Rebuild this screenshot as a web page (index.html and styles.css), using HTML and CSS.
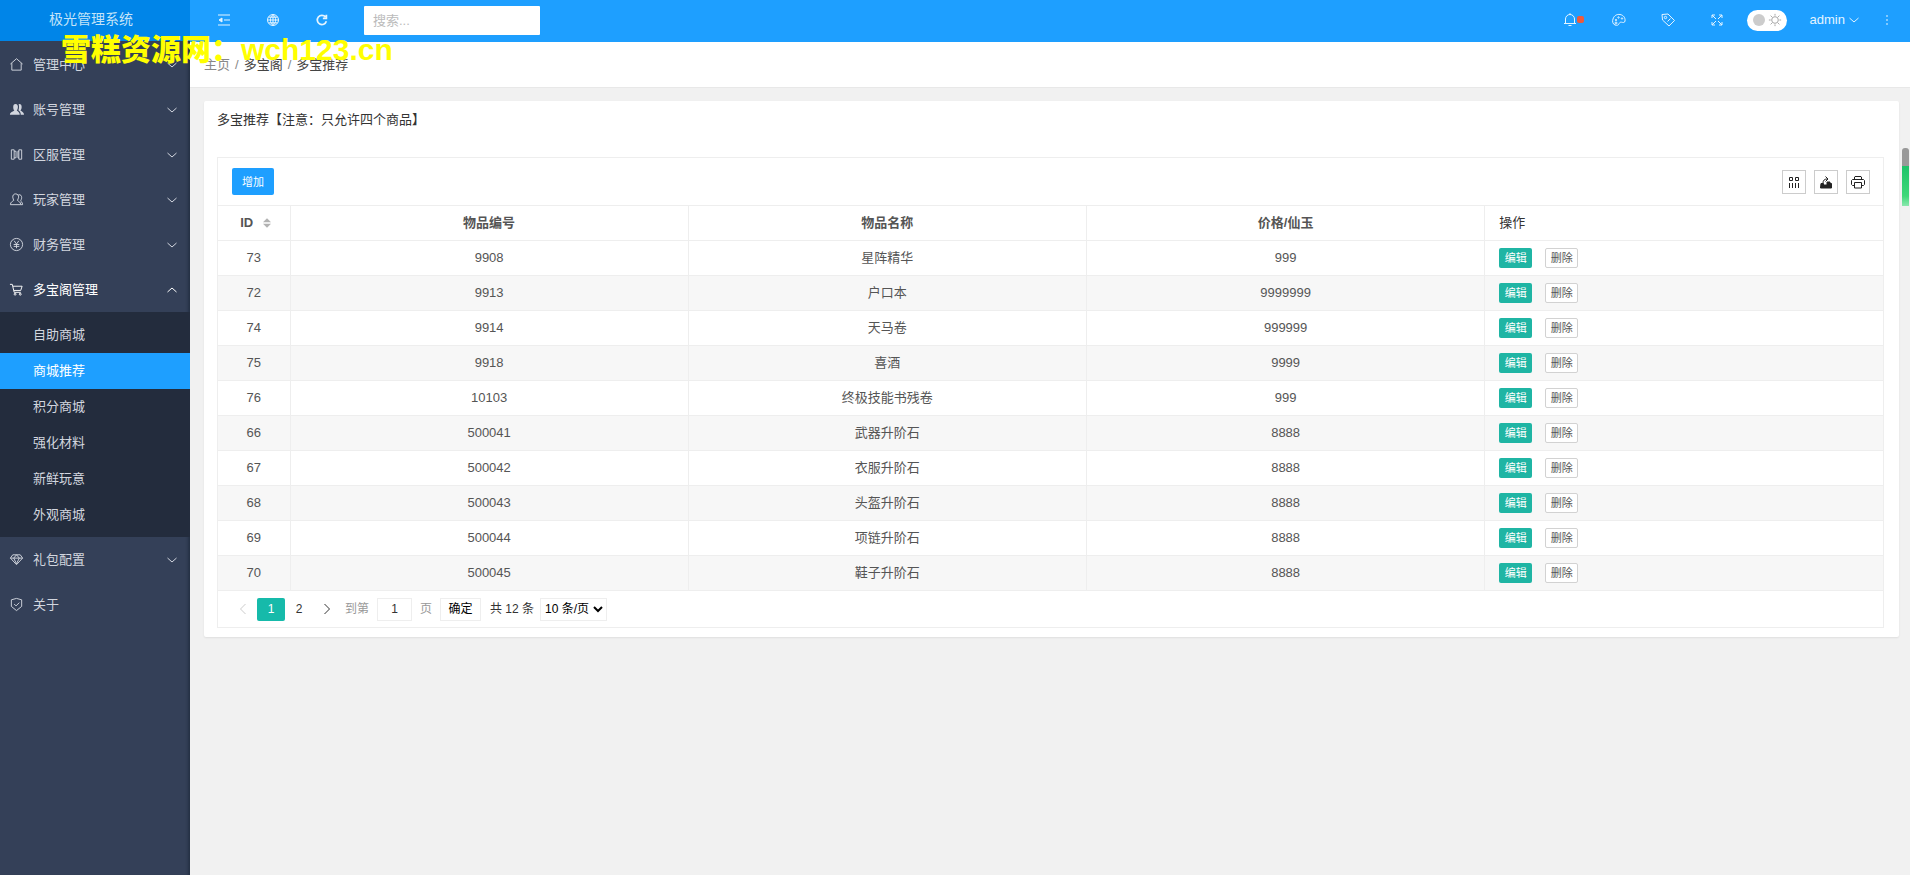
FILE: index.html
```html
<!DOCTYPE html>
<html lang="zh-CN">
<head>
<meta charset="utf-8">
<title>极光管理系统</title>
<link rel="stylesheet" href="styles.css">
</head>
<body>
<div class="layout">
  <aside class="side">
    <div class="logo">极光管理系统</div>
    <nav class="menu">
      <a class="item" href="#"><svg class="icon" viewBox="0 0 16 16"><path d="M1.500 7.500 8 1.800l6.500 5.700M3 6.500V14h10V6.500"/></svg><span>管理中心</span><svg class="arrow" viewBox="0 0 12 8"><path d="m1.500 2 4.500 4 4.500-4"/></svg></a>
      <a class="item" href="#"><svg class="icon solid" viewBox="0 0 16 16"><path d="M7 2c1.800 0 2.500 1.500 2.500 3.200S8.700 8.500 8.300 9c1.500 1.200 3.200 2 3.200 4.500H1c0-2.500 2.500-3 4.700-4.500C5 8.500 4.500 7 4.500 5.200S5.200 2 7 2zM10.300 2.300c2.200-.4 3.200 1 3.200 2.900s-.8 3.300-1.300 3.800c1.800 1.200 3.800 2 3.800 4.500h-3.500c0-2.500-1-3.300-2.500-4.600.8-1.600.9-4.600.3-6.600z"/></svg><span>账号管理</span><svg class="arrow" viewBox="0 0 12 8"><path d="m1.500 2 4.500 4 4.500-4"/></svg></a>
      <a class="item" href="#"><svg class="icon" viewBox="0 0 16 16"><path d="M2.500 3h3v10h-3zM10.500 3h3v10h-3zM5.500 4.500h2v7h-2M10.500 4.500h-1v7h1"/></svg><span>区服管理</span><svg class="arrow" viewBox="0 0 12 8"><path d="m1.500 2 4.500 4 4.500-4"/></svg></a>
      <a class="item" href="#"><svg class="icon" viewBox="0 0 16 16"><path d="M7 2C4.500 2 4 4 4 5.500S5 8 5 9c-1 1-3.500 1.500-3.500 4.500h11C12.500 10.500 10 10 9 9c0-1 1.300-2 1.300-3.500S9.500 2 7 2zM10 3c2.500-.5 3.500 1 3.500 3s-1 2.500-1 3.500 2 1 2 4h-2"/></svg><span>玩家管理</span><svg class="arrow" viewBox="0 0 12 8"><path d="m1.500 2 4.500 4 4.500-4"/></svg></a>
      <a class="item" href="#"><svg class="icon" viewBox="0 0 16 16"><circle cx="8" cy="8" r="6.500"/><path d="m5.500 4 2.500 3.500L10.500 4M5 8h6M5 10h6M8 7.500V12"/></svg><span>财务管理</span><svg class="arrow" viewBox="0 0 12 8"><path d="m1.500 2 4.500 4 4.500-4"/></svg></a>
      <a class="item open" href="#"><svg class="icon" viewBox="0 0 16 16"><path d="M1 2.500h2.500l2 8.500h7M4.200 4.500H14l-1.500 4.500H5.300"/><circle cx="6.500" cy="13" r="1"/><circle cx="12" cy="13" r="1"/></svg><span>多宝阁管理</span><svg class="arrow" viewBox="0 0 12 8"><path d="m1.500 6 4.500-4 4.500 4"/></svg></a>
      <div class="submenu">
        <a class="sub" href="#">自助商城</a>
        <a class="sub active" href="#">商城推荐</a>
        <a class="sub" href="#">积分商城</a>
        <a class="sub" href="#">强化材料</a>
        <a class="sub" href="#">新鲜玩意</a>
        <a class="sub" href="#">外观商城</a>
      </div>
      <a class="item" href="#"><svg class="icon" viewBox="0 0 16 16"><path d="M4 3h8l2.500 3.500L8 13.500 1.500 6.500zM1.500 6.500h13M5 6.500l3 6 3-6L8 3z"/></svg><span>礼包配置</span><svg class="arrow" viewBox="0 0 12 8"><path d="m1.500 2 4.500 4 4.500-4"/></svg></a>
      <a class="item" href="#"><svg class="icon" viewBox="0 0 16 16"><path d="M8 1.500 13.500 3v7L8 14.500 2.500 10V3zM5.500 7.500l2 2 3.500-3.500"/></svg><span>关于</span></a>
    </nav>
  </aside>
  <div class="main">
    <header class="header">
      <button class="tool" aria-label="收起菜单"><svg viewBox="0 0 16 16"><path d="M2 3h12M8 8h6M2 13h12"/><path fill="currentColor" d="M6 6 3 8l3 2z"/></svg></button>
      <button class="tool" aria-label="网站"><svg viewBox="0 0 16 16"><circle cx="8" cy="8" r="5.500"/><path d="M2.500 8h11M8 2.500v11M3.500 5.200h9M3.500 10.800h9M8 2.500C4.500 5 4.500 11 8 13.500M8 2.500c3.500 2.500 3.500 8.500 0 11"/></svg></button>
      <button class="tool" aria-label="刷新"><svg class="bold" viewBox="0 0 16 16"><path d="M13 9.500A5.300 5.300 0 1 1 12 4.500M13 2v4H9"/></svg></button>
      <input class="search" type="text" placeholder="搜索..." aria-label="搜索">
      <div class="spacer"></div>
      <button class="tool bell" aria-label="消息"><svg viewBox="0 0 16 16"><path d="M3.500 11.500V7a4.500 4.500 0 0 1 9 0v4.500M2 11.500h12M6.500 13.500h3M8 1.200v1.300"/></svg><i class="dot"></i></button>
      <button class="tool" aria-label="主题"><svg viewBox="0 0 16 16"><path d="M4 13C1.500 12 1.200 9 2 7c1-3.500 4-5 7-4.500 3.500.5 5.500 3.500 5 6.500-.3 2-2 1.500-3.500 1.200-1.500-.2-2 .5-2.500 1.600-.6 1.400-2 2-4 1.200z"/><circle cx="5" cy="8" r=".7"/><circle cx="7.500" cy="5.500" r=".7"/><circle cx="11" cy="6.500" r=".7"/><circle cx="5" cy="11" r="1"/></svg></button>
      <button class="tool" aria-label="便签"><svg viewBox="0 0 16 16"><path d="M2 2.500 8 2l6.500 6.500-5.500 5.500L2.500 8z"/><circle cx="5.500" cy="5.500" r="1.200"/><path d="m7.500 9.500 3-3"/></svg></button>
      <button class="tool" aria-label="全屏"><svg viewBox="0 0 16 16"><path d="M3 6V3h3M3 3l4 4M10 3h3v3M13 3 9 7M3 10v3h3M3 13l4-4M13 10v3h-3M13 13 9 9"/></svg></button>
      <label class="switch"><input type="checkbox" aria-label="主题模式"><span class="knob"></span><svg viewBox="0 0 16 16"><circle cx="8" cy="8" r="3.800"/><path d="M8 1v2M8 13v2M1 8h2M13 8h2M3 3l1.500 1.500M11.500 11.500 13 13M13 3l-1.500 1.500M4.500 11.500 3 13"/></svg></label>
      <button class="user">admin<svg class="arrow" viewBox="0 0 12 8"><path d="m1.500 2 4.500 4 4.500-4"/></svg></button>
      <button class="more" aria-label="更多"><svg viewBox="0 0 4 16"><path d="M2 3v2M2 7v2M2 11v2"/></svg></button>
    </header>
    <nav class="crumbs"><a href="#">主页</a><i>/</i><span>多宝阁</span><i>/</i><span>多宝推荐</span></nav>
    <main class="card">
      <h1 class="title">多宝推荐【注意：只允许四个商品】</h1>
      <div class="box">
        <div class="bar">
          <button class="add">增加</button>
          <div class="spacer"></div>
          <button class="sq" aria-label="筛选列"><svg viewBox="0 0 16 16"><path d="M3.500 3.500h3v3h-3zM9.500 3.500h3v3h-3zM3.500 9v5M6.500 9v5M9.500 9v5M12.500 9v5"/></svg></button>
          <button class="sq" aria-label="导出"><svg viewBox="0 0 16 16"><path fill="currentColor" d="M3 9.500h2.500V11L9 11V8h3v1.500h1.500V14h-11z"/><path d="M5 9c0-2.500 1.500-4 4-4M7.500 2.500l2.500 2.500-2.500 2.500"/></svg></button>
          <button class="sq" aria-label="打印"><svg viewBox="0 0 16 16"><path d="M4.500 5.500V3l.5-.5h6l.5.500v2.500M4.500 11.500H2.500l-1-1V6.500l1-1h11l1 1v4l-1 1h-2M4.500 8.500h7V14h-7z"/></svg></button>
        </div>
        <table class="grid">
          <colgroup><col class="c-id"><col><col><col><col></colgroup>
          <thead><tr><th class="id">ID<svg class="sort" viewBox="0 0 10 12"><path d="M5 0l5 5H0zM5 12l5-5H0z"/></svg></th><th>物品编号</th><th>物品名称</th><th>价格/仙玉</th><th class="ops">操作</th></tr></thead>
          <tbody>
            <tr><td>73</td><td>9908</td><td>星阵精华</td><td>999</td><td class="ops"><button class="edit">编辑</button><button class="del">删除</button></td></tr>
            <tr><td>72</td><td>9913</td><td>户口本</td><td>9999999</td><td class="ops"><button class="edit">编辑</button><button class="del">删除</button></td></tr>
            <tr><td>74</td><td>9914</td><td>天马卷</td><td>999999</td><td class="ops"><button class="edit">编辑</button><button class="del">删除</button></td></tr>
            <tr><td>75</td><td>9918</td><td>喜酒</td><td>9999</td><td class="ops"><button class="edit">编辑</button><button class="del">删除</button></td></tr>
            <tr><td>76</td><td>10103</td><td>终极技能书残卷</td><td>999</td><td class="ops"><button class="edit">编辑</button><button class="del">删除</button></td></tr>
            <tr><td>66</td><td>500041</td><td>武器升阶石</td><td>8888</td><td class="ops"><button class="edit">编辑</button><button class="del">删除</button></td></tr>
            <tr><td>67</td><td>500042</td><td>衣服升阶石</td><td>8888</td><td class="ops"><button class="edit">编辑</button><button class="del">删除</button></td></tr>
            <tr><td>68</td><td>500043</td><td>头盔升阶石</td><td>8888</td><td class="ops"><button class="edit">编辑</button><button class="del">删除</button></td></tr>
            <tr><td>69</td><td>500044</td><td>项链升阶石</td><td>8888</td><td class="ops"><button class="edit">编辑</button><button class="del">删除</button></td></tr>
            <tr><td>70</td><td>500045</td><td>鞋子升阶石</td><td>8888</td><td class="ops"><button class="edit">编辑</button><button class="del">删除</button></td></tr>
          </tbody>
        </table>
        <div class="pager">
          <button class="pg off" aria-label="上一页"><svg viewBox="0 0 8 12"><path d="M6.500 1 1.500 6l5 5"/></svg></button>
          <button class="pg cur">1</button>
          <button class="pg">2</button>
          <button class="pg" aria-label="下一页"><svg viewBox="0 0 8 12"><path d="m1.500 1 5 5-5 5"/></svg></button>
          <label class="skip">到第<input type="text" value="1">页</label>
          <button class="go">确定</button>
          <span class="count">共 12 条</span>
          <select class="limit" aria-label="每页条数"><option>10 条/页</option></select>
        </div>
      </div>
    </main>
  </div>
</div>
<div class="watermark">雪糕资源网：wch123.cn</div>
<div class="thumb"></div>
</body>
</html>
```
FILE: styles.css
```css
* { box-sizing: border-box; }
body {
  margin: 0;
  background: #f1f1f1;
  color: #333;
  font: 13px/20px "Liberation Sans", "Noto Sans CJK SC", sans-serif;
}
a { color: inherit; text-decoration: none; }
i { font-style: normal; }
button, input, select { font: inherit; color: inherit; margin: 0; }
button { padding: 0; border: 0; background: none; }
svg { display: block; fill: none; stroke: currentColor; stroke-width: 1; }
.spacer { flex: 1; }

.layout { display: flex; min-height: 100vh; }
.side {
  width: 190px;
  flex: none;
  background: #344058;
  color: #d2d6df;
  box-shadow: inset -4px 0 3px -2px rgba(20, 28, 45, .45);
}
.logo {
  height: 41px;
  background: #0085e8;
  color: #c4e4f8;
  font-size: 14px;
  line-height: 38px;
  text-align: center;
  padding-right: 8px;
}
.menu { padding-top: 1px; }
.item { display: flex; align-items: center; height: 45px; padding: 0 12px 0 9px; }
.item .icon { width: 15px; height: 15px; margin-right: 9px; }
.item .solid { fill: currentColor; stroke: none; }
.arrow { width: 12px; height: 8px; }
.item .arrow { margin-left: auto; }
.open { color: #fff; }
.submenu { padding: 5px 0 4px; background: #232c3d; }
.sub { display: block; height: 36px; line-height: 36px; padding-left: 33px; }
.active { background: #1e9fff; color: #fff; }

.main { flex: 1; min-width: 0; }
.header {
  display: flex;
  align-items: center;
  height: 42px;
  padding: 0 21px 2px 9px;
  background: #1e9fff;
  color: #e4f4ff;
}
.tool { display: flex; align-items: center; justify-content: center; width: 49px; height: 38px; }
.tool svg { width: 16px; height: 16px; }
.tool .bold { stroke-width: 2; width: 14px; height: 14px; }
.bell { position: relative; }
.dot { position: absolute; left: 31px; top: 15px; width: 7px; height: 7px; border-radius: 2px; background: #ee5a3c; }
.search {
  width: 176px;
  height: 29px;
  margin-left: 18px;
  padding: 0 9px;
  border: 0;
  border-radius: 1px;
  background: #fff;
  color: #333;
}
.search::placeholder { color: #bbb; }
.switch {
  display: flex;
  align-items: center;
  justify-content: space-between;
  width: 40px;
  height: 21px;
  margin: 0 23px 0 5px;
  padding: 0 5px 0 6px;
  border-radius: 11px;
  background: #fff;
  color: #999;
}
.switch input { position: absolute; opacity: 0; pointer-events: none; }
.knob { width: 12px; height: 12px; border-radius: 6px; background: #ccc; }
.switch svg { width: 14px; height: 14px; }
.user { display: flex; align-items: center; gap: 3px; }
.more { margin-left: 25px; width: 4px; }
.more svg { width: 4px; height: 16px; }

.crumbs {
  display: flex;
  gap: 5px;
  height: 46px;
  line-height: 46px;
  padding-left: 14px;
  background: #fff;
  border-bottom: 1px solid #e8e8e8;
  color: #444;
}
.crumbs a, .crumbs i { color: #888; }

.card {
  margin: 13px 11px 0 14px;
  padding: 0 15px 9px 13px;
  background: #fff;
  border-radius: 2px;
  box-shadow: 0 1px 2px rgba(0, 0, 0, .08);
}
.title { margin: 0; height: 56px; font-size: 13px; font-weight: 400; line-height: 38px; }
.box { border: 1px solid #eee; }
.bar { display: flex; align-items: center; gap: 8px; height: 47px; padding: 0 13px 0 14px; }
.add { width: 42px; height: 27px; border-radius: 2px; background: #1e9fff; color: #fff; font-size: 11px; }
.sq {
  display: flex;
  align-items: center;
  justify-content: center;
  width: 24px;
  height: 24px;
  border: 1px solid #ccc;
  color: #222;
}
.sq svg { width: 16px; height: 16px; }

.grid { width: 100%; border-collapse: collapse; table-layout: fixed; color: #555; }
.c-id { width: 72px; }
.grid th, .grid td { height: 35px; padding: 0; border: 1px solid #eee; text-align: center; }
.grid tr > :first-child { border-left: 0; }
.grid tr > :last-child { border-right: 0; }
.grid tbody tr:nth-child(even) { background: #f7f7f7; }
.grid .ops { padding-left: 14px; text-align: left; }
.grid th.ops { font-weight: 400; color: #333; }
.grid .id { padding-left: 4px; }
.sort { display: inline-block; width: 8px; height: 10px; margin-left: 10px; fill: #b2b2b2; stroke: none; vertical-align: -1px; }
.edit, .del { width: 33px; height: 20px; border-radius: 2px; font-size: 11px; line-height: 18px; vertical-align: middle; }
.edit { margin-right: 13px; background: #1fb5a4; color: #fff; }
.del { border: 1px solid #d2d2d2; background: #fff; }

.pager { display: flex; align-items: center; height: 36px; padding-left: 11px; color: #333; font-size: 12px; }
.pg { display: flex; align-items: center; justify-content: center; width: 28px; height: 23px; }
.pg svg { width: 8px; height: 12px; }
.off { color: #ccc; }
.cur { border-radius: 2px; background: #16baaa; color: #fff; }
.skip { display: flex; align-items: center; gap: 8px; margin-left: 4px; color: #999; }
.skip input { width: 35px; height: 23px; padding: 0; border: 1px solid #eee; color: #333; text-align: center; }
.go { width: 41px; height: 23px; margin: 0 9px 0 8px; border: 1px solid #eee; color: #000; }
.limit { height: 23px; margin-left: 6px; padding: 0; border: 1px solid #eee; background: #fff; color: #000; }

.watermark {
  position: absolute;
  left: 61px;
  top: 30px;
  color: #ff0;
  font-size: 30px;
  font-weight: 900;
  line-height: 40px;
  white-space: nowrap;
  pointer-events: none;
}
.thumb {
  position: absolute;
  right: 1px;
  top: 148px;
  width: 7px;
  height: 58px;
  border-radius: 3px 3px 0 0;
  background: linear-gradient(#999 0 18px, #1fc36a 18px, #3fd878 48px, #8be8ae);
}
```
